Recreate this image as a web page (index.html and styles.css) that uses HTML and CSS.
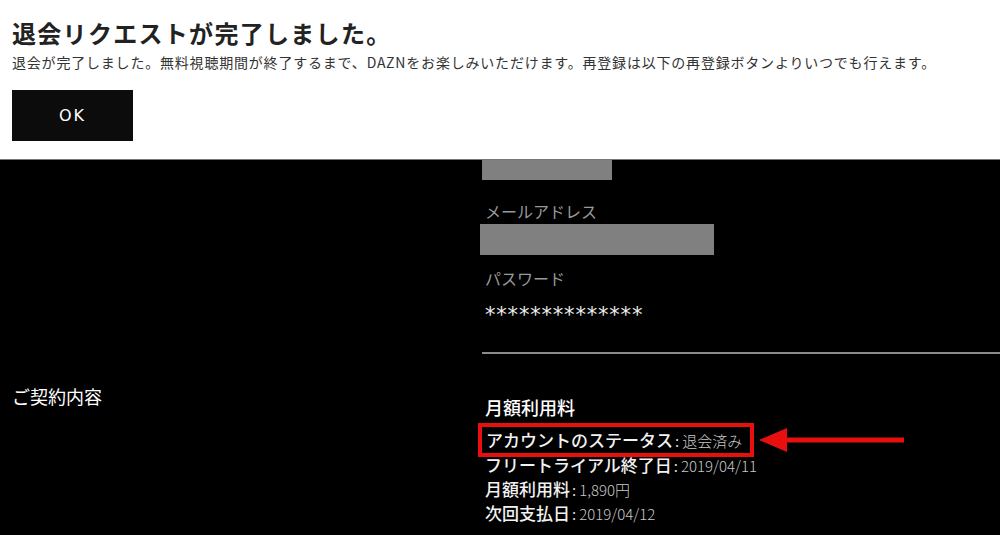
FILE: index.html
```html
<!DOCTYPE html>
<html lang="ja">
<head>
    <meta charset="UTF-8">
    <meta name="viewport" content="width=device-width, initial-scale=1.0">
    <title>マイ・アカウント</title>
    <link rel="stylesheet" href="styles.css">
</head>
<body>
    <div class="notice">
        <h2 class="notice-title">退会リクエストが完了しました。</h2>
        <p class="notice-text">退会が完了しました。無料視聴期間が終了するまで、DAZNをお楽しみいただけます。再登録は以下の再登録ボタンよりいつでも行えます。</p>
        <button class="ok-btn">OK</button>
    </div>

    <div class="account">
        <div class="side"></div>
        <div class="info">
            <div class="masked masked-name"></div>
            <div class="field-label">メールアドレス</div>
            <div class="masked masked-mail"></div>
            <div class="field-label pw-label">パスワード</div>
            <div class="password">**************</div>
        </div>

        <div class="side side-title">ご契約内容</div>
        <div class="contract">
            <h3 class="plan">月額利用料</h3>
            <div class="status-row">
                <div class="status-box">
                    <span class="key">アカウントのステータス</span><span class="colon">:</span><span class="val">退会済み</span>
                </div>
                <svg class="arrow" width="146" height="30" viewBox="0 0 146 30">
                    <polygon points="0,15 28,3 28,27" fill="#e8100e"/>
                    <rect x="26" y="12.5" width="119" height="5" fill="#e8100e"/>
                </svg>
            </div>
            <div class="row"><span class="key">フリートライアル終了日</span><span class="colon">:</span><span class="val">2019/04/11</span></div>
            <div class="row"><span class="key">月額利用料</span><span class="colon">:</span><span class="val">1,890円</span></div>
            <div class="row"><span class="key">次回支払日</span><span class="colon">:</span><span class="val">2019/04/12</span></div>
        </div>
    </div>
</body>
</html>
```

FILE: styles.css
```css
body {
    margin: 0;
    background: #000;
    font-family: "Noto Sans CJK JP", "Noto Sans", sans-serif;
    color: #fff;
}

.notice {
    background: #fff;
    color: #222;
    height: 160px;
    padding: 17px 12px 0;
    box-sizing: border-box;
    border-bottom: 1px solid #777;
}

.notice-title {
    margin: 0;
    font-size: 24px;
    line-height: 32px;
    font-weight: 700;
    letter-spacing: 1.3px;
}

.notice-text {
    margin: 3px 0 0;
    font-size: 14px;
    line-height: 20px;
    letter-spacing: 0.8px;
    color: #333;
}

.ok-btn {
    display: block;
    margin-top: 18px;
    width: 121px;
    height: 51px;
    border: none;
    background: #0c0c0c;
    color: #fff;
    font-family: "DejaVu Sans", sans-serif;
    font-size: 16px;
    letter-spacing: 2px;
}

.account {
    display: grid;
    grid-template-columns: 482px 1fr;
}

.side {
    padding-left: 12px;
}

.side-title {
    padding-top: 29px;
    font-size: 18px;
    line-height: 26px;
}

.info {
    border-bottom: 2px solid #8a8a8a;
    padding-bottom: 25px;
}

.masked {
    background: #808080;
}

.masked-name {
    width: 130px;
    height: 20px;
}

.masked-mail {
    width: 234px;
    height: 31px;
    margin: 2px 0 0 -2px;
}

.field-label {
    margin-top: 20px;
    padding-left: 3px;
    font-size: 16px;
    line-height: 22px;
    color: #9a9a9a;
}

.pw-label {
    margin-top: 12px;
}

.password {
    margin-top: 14px;
    padding-left: 3px;
    font-family: "DejaVu Sans", sans-serif;
    font-size: 21px;
    line-height: 24px;
    letter-spacing: 0.8px;
    color: #eee;
}

.contract {
    padding: 40px 0 0 3px;
}

.plan {
    margin: 0 0 3px;
    font-size: 18px;
    line-height: 26px;
    font-weight: 500;
}

.status-row {
    display: flex;
    align-items: center;
}

.status-box {
    position: relative;
    z-index: 1;
    margin-left: -7px;
    padding: 0 8px 0 4px;
    border: 4px solid #e8100e;
    line-height: 25px;
    white-space: nowrap;
}

.arrow {
    margin-left: 5px;
}

.row {
    height: 24px;
    margin-top: -4px;
    line-height: 24px;
    white-space: nowrap;
}

.row + .row {
    margin-top: 0;
}

.key {
    font-size: 17px;
    font-weight: 500;
    color: #f2f2f2;
}

.colon {
    font-size: 15px;
    margin: 0 3px 0 2px;
    color: #ddd;
}

.val {
    font-size: 15px;
    font-weight: 300;
    color: #c8c8c8;
}
```
